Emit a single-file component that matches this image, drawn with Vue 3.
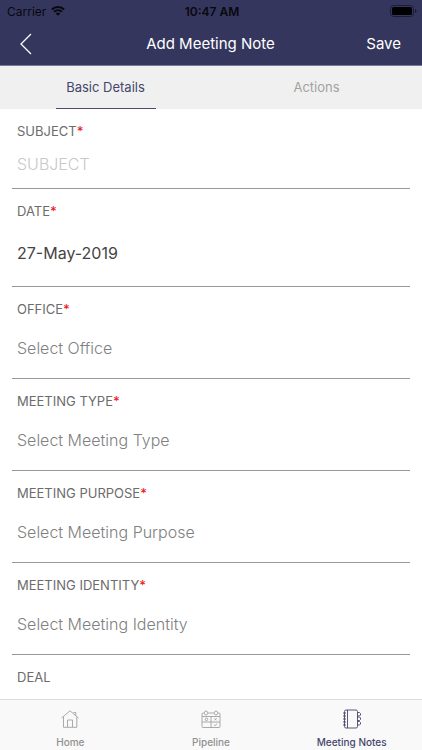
<script setup>
import { ref } from 'vue'

const tabs = ['Basic Details', 'Actions']
const activeTab = ref('Basic Details')
const subject = ref('')
const date = ref('27-May-2019')

const pickers = [
  { id: 'office', label: 'OFFICE', prompt: 'Select Office' },
  { id: 'meeting-type', label: 'MEETING TYPE', prompt: 'Select Meeting Type' },
  { id: 'meeting-purpose', label: 'MEETING PURPOSE', prompt: 'Select Meeting Purpose' },
  { id: 'meeting-identity', label: 'MEETING IDENTITY', prompt: 'Select Meeting Identity' },
]
</script>

<template>
  <div class="screen">
    <header class="header">
      <div class="status">
        <div class="carrier">
          <span>Carrier</span>
          <svg class="wifi" viewBox="0 0 14 10" aria-hidden="true">
            <path d="M0.9 3.5C4.3 0.3 9.7 0.3 13.1 3.5" />
            <path d="M3 5.8C5.3 3.7 8.7 3.7 11 5.8" />
            <path class="dot" d="M4.7 7.4Q7 5.6 9.3 7.4L7 9.8Z" />
          </svg>
        </div>
        <span class="time">10:47 AM</span>
        <svg class="battery" viewBox="0 0 27 12" aria-hidden="true">
          <rect class="shell" x="0.5" y="0.5" width="23" height="11" rx="3" />
          <rect x="2" y="2" width="20" height="8" rx="1.5" />
          <path d="M25 4Q26.5 4.6 26.5 6T25 8Z" opacity="0.5" />
        </svg>
      </div>
      <div class="nav">
        <button class="back" type="button" aria-label="Back">
          <svg viewBox="0 0 12 22" aria-hidden="true"><path d="M11 1L1 11L11 21" /></svg>
        </button>
        <h1>Add Meeting Note</h1>
        <button class="save" type="button">Save</button>
      </div>
    </header>

    <div class="tabs">
      <button
        v-for="tab in tabs"
        :key="tab"
        type="button"
        :class="{ active: tab === activeTab }"
        @click="activeTab = tab"
      ><span>{{ tab }}</span></button>
    </div>

    <main class="form">
      <div class="field">
        <label for="subject">SUBJECT<b>*</b></label>
        <input id="subject" v-model="subject" class="subject" type="text" placeholder="SUBJECT">
      </div>
      <div class="field">
        <label for="date">DATE<b>*</b></label>
        <input id="date" v-model="date" class="date" type="text">
      </div>
      <div v-for="p in pickers" :key="p.id" class="field">
        <label :for="p.id">{{ p.label }}<b>*</b></label>
        <select :id="p.id"><option>{{ p.prompt }}</option></select>
      </div>
      <div class="field">
        <label for="deal">DEAL</label>
        <select id="deal"><option>Select Deal</option></select>
      </div>
    </main>

    <nav class="bottom">
      <a href="#home">
        <svg viewBox="0 0 20 20" aria-hidden="true">
          <path d="M1.5 9L10 1.8L18.5 9M3.5 7.8V18.3H16.8V7.8M7.5 18V11H12.5V18M13.5 3.5H15.8V6.5" />
        </svg>
        <span>Home</span>
      </a>
      <a href="#pipeline">
        <svg viewBox="0 0 20 20" aria-hidden="true">
          <path d="M3.4 4H2Q1 4 1 5V17.5Q1 18.5 2 18.5H18Q19 18.5 19 17.5V5Q19 4 18 4H16.6M6.6 4H13.4M1 7.5H19M10 7.5V18.5M1 13H19" />
          <rect x="3.5" y="2" width="3" height="4" rx="1.5" />
          <rect x="13.5" y="2" width="3" height="4" rx="1.5" />
          <circle cx="5.5" cy="10.3" r="1.3" />
          <path d="M13.5 9.3L15.5 11.3M15.5 9.3L13.5 11.3M13 15.8L14 16.8L16 14.5" />
        </svg>
        <span>Pipeline</span>
      </a>
      <a href="#notes" class="current">
        <svg viewBox="0 0 20 20" aria-hidden="true">
          <path d="M4 1H14Q15.5 1 15.5 2.5V17.5Q15.5 19 14 19H4Q2.5 19 2.5 17.5V2.5Q2.5 1 4 1ZM5.5 1V19" />
          <path d="M1 4H4M1 7H4M1 10H4M1 13H4M1 16H4" />
          <path d="M15.5 3.5H17.5L18.5 4.5V6L17.5 7H15.5M15.5 8H17.5L18.5 9V10.5L17.5 11.5H15.5M15.5 12.5H17.5L18.5 13.5V15L17.5 16H15.5" />
        </svg>
        <span>Meeting Notes</span>
      </a>
    </nav>
  </div>
</template>

<style>
body {
  margin: 0;
}
</style>

<style scoped>
.screen {
  display: flex;
  flex-direction: column;
  height: 100vh;
  background: #fff;
  font-family: Inter, "Liberation Sans", sans-serif;
}
button, input, select {
  margin: 0;
  padding: 0;
  border: 0;
  background: none;
  font-family: inherit;
  appearance: none;
  border-radius: 0;
}
.header {
  flex: none;
  background: #35365d;
  border-bottom: 1px solid #77789a;
}
.status {
  display: grid;
  grid-template-columns: 1fr auto 1fr;
  align-items: center;
  height: 22px;
  padding: 0 5px 0 7px;
  font-size: 12px;
  color: #08080f;
}
.carrier {
  display: flex;
  align-items: center;
  gap: 5px;
}
.wifi {
  width: 14px;
  height: 10px;
  fill: none;
  stroke: #08080f;
  stroke-width: 2;
}
.wifi .dot {
  fill: #08080f;
  stroke: none;
}
.time {
  font-weight: 600;
}
.battery {
  justify-self: end;
  width: 27px;
  height: 12px;
}
.battery .shell {
  fill: none;
  stroke: #1c1c38;
}
.nav {
  display: grid;
  grid-template-columns: 1fr auto 1fr;
  align-items: center;
  height: 43px;
  padding: 0 21px 0 20px;
  color: #fff;
}
.nav h1 {
  margin: 0;
  font-size: 15px;
  font-weight: 400;
}
.back {
  justify-self: start;
  height: 43px;
}
.back svg {
  display: block;
  width: 12px;
  height: 22px;
  fill: none;
  stroke: #fff;
  stroke-width: 1.3;
}
.save {
  justify-self: end;
  height: 43px;
  font-size: 15px;
  color: #fff;
}
.tabs {
  flex: none;
  display: grid;
  grid-template-columns: 1fr 1fr;
  justify-items: center;
  height: 43px;
  background: #f0f0f0;
}
.tabs button {
  width: 100px;
  border-bottom: 1px solid transparent;
  font-size: 13px;
  color: #a2a2a2;
}
.tabs .active {
  border-color: #4a4b75;
  color: #45466c;
}
.form {
  flex: 1;
  min-height: 0;
  overflow: hidden;
  padding: 0 12px;
}
.field {
  display: flex;
  flex-direction: column;
  padding: 13px 5px 1px;
  border-bottom: 1px solid #999;
}
.field label {
  font-size: 13px;
  line-height: 18px;
  color: #6c6c6c;
}
.field b {
  font-weight: 500;
  color: #ee1c25;
}
.field input, .field select {
  width: 100%;
  height: 59px;
  font-size: 16px;
  font-weight: 300;
  color: #808080;
  outline: none;
}
.field .subject {
  height: 47px;
}
.field .subject::placeholder {
  color: #c8c8c8;
}
.field .date {
  height: 65px;
  font-weight: 400;
  color: #444;
}
.bottom {
  flex: none;
  display: grid;
  grid-template-columns: repeat(3, 1fr);
  height: 50px;
  border-top: 1px solid #dcdcdc;
  background: #f9f9f9;
}
.bottom a {
  display: flex;
  flex-direction: column;
  align-items: center;
  gap: 6px;
  padding-top: 9px;
  font-size: 10px;
  font-weight: 500;
  line-height: 14px;
  text-decoration: none;
  color: #909090;
}
.bottom svg {
  width: 20px;
  height: 20px;
  fill: none;
  stroke: #a0a0a0;
  stroke-width: 0.9;
}
.bottom .current {
  color: #45466c;
}
.bottom .current svg {
  stroke: #45466c;
}
</style>
